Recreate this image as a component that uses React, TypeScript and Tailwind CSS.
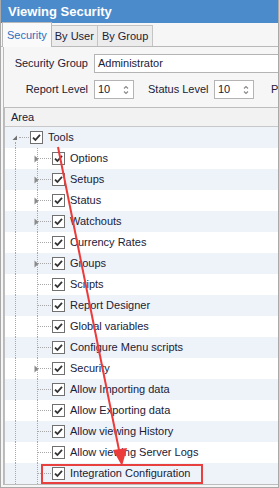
import React from "react";

type Item = { label: string; expander?: boolean };

const children: Item[] = [
  { label: "Options", expander: true },
  { label: "Setups", expander: true },
  { label: "Status", expander: true },
  { label: "Watchouts", expander: true },
  { label: "Currency Rates" },
  { label: "Groups", expander: true },
  { label: "Scripts" },
  { label: "Report Designer" },
  { label: "Global variables" },
  { label: "Configure Menu scripts" },
  { label: "Security", expander: true },
  { label: "Allow Importing data" },
  { label: "Allow Exporting data" },
  { label: "Allow viewing History" },
  { label: "Allow viewing Server Logs" },
  { label: "Integration Configuration" },
];

function CheckBox() {
  return (
    <span className="flex h-[13px] w-[13px] shrink-0 items-center justify-center border border-[#707070] bg-white">
      <svg width="11" height="11" viewBox="0 0 11 11">
        <path d="M2 5.6 L4.4 8 L9 2.8" fill="none" stroke="#333" strokeWidth="1.8" />
      </svg>
    </span>
  );
}

function Spinner({ value }: { value: string }) {
  return (
    <div className="flex h-[19px] w-[40px] items-center justify-between border border-[#b4b4b4] bg-white pl-[3px] pr-[4px]">
      <span>{value}</span>
      <svg width="6" height="12" viewBox="0 0 6 12">
        <path d="M1 4.5 L3 2.5 L5 4.5 M1 7.5 L3 9.5 L5 7.5" fill="none" stroke="#8a8a8a" strokeWidth="1.2" />
      </svg>
    </div>
  );
}

function RootRow() {
  return (
    <div className="flex h-[21px] items-center bg-[#eef3f9]">
      <div className="relative h-full w-[25px] shrink-0">
        <svg className="absolute left-[7px] top-[8px]" width="6" height="6" viewBox="0 0 6 6">
          <path d="M5 0.5 L5 5 L0.5 5 Z" fill="#707070" />
        </svg>
        <span className="absolute left-[10px] top-[15px] h-[6px] border-l border-dotted border-[#a8a8a8]" />
        <span className="absolute left-[14px] top-[10px] w-[10px] border-t border-dotted border-[#a8a8a8]" />
      </div>
      <CheckBox />
      <span className="ml-[5px]">Tools</span>
    </div>
  );
}

function ChildRow({ item, shaded }: { item: Item; shaded: boolean }) {
  return (
    <div className={`flex h-[21px] items-center ${shaded ? "bg-[#eef3f9]" : "bg-white"}`}>
      <div className="relative h-full w-[47px] shrink-0">
        <span className="absolute left-[10px] top-0 h-full border-l border-dotted border-[#a8a8a8]" />
        <span className="absolute left-[32px] top-0 h-full border-l border-dotted border-[#a8a8a8]" />
        <span className="absolute left-[33px] top-[10px] w-[13px] border-t border-dotted border-[#a8a8a8]" />
        {item.expander && (
          <svg className="absolute left-[29px] top-[7px]" width="5" height="8" viewBox="0 0 5 8">
            <path d="M0.5 0.5 L4.5 4 L0.5 7.5 Z" fill="#8a8a8a" />
          </svg>
        )}
      </div>
      <CheckBox />
      <span className="ml-[5px] whitespace-nowrap">{item.label}</span>
    </div>
  );
}

export default function App() {
  return (
    <div
      className="relative h-[488px] w-[279px] overflow-hidden border-x border-b border-[#a9a9a9] bg-[#f6f6f6] text-[11px] text-[#1a2138]"
      style={{ fontFamily: '"Liberation Sans", Arial, sans-serif' }}
    >
      <div className="flex h-[23px] items-center bg-[#4b8bcb] pl-[7px] text-[13px] font-bold text-white">
        Viewing Security
      </div>

      <div className="flex h-[24px] items-end border-b border-[#b9b9b9] pl-[1px]">
        <div className="-mb-px flex h-[25px] items-center border border-b-0 border-[#b9b9b9] bg-[#fafafa] px-[4px] text-[#2a6fc0]">
          Security
        </div>
        <div className="flex h-[21px] items-center border border-l-0 border-b-0 border-[#c4c4c4] bg-[#ececec] px-[3px]">
          By User
        </div>
        <div className="flex h-[21px] items-center border border-l-0 border-b-0 border-[#c4c4c4] bg-[#ececec] px-[4px]">
          By Group
        </div>
      </div>

      <div className="ml-[2px] border-l border-[#b9b9b9]">
        <div className="flex flex-col gap-[7px] pb-[8px] pt-[7px]">
          <div className="flex items-center">
            <span className="w-[84px] shrink-0 whitespace-nowrap text-right">Security Group</span>
            <div className="ml-[6px] flex h-[19px] w-[200px] shrink-0 items-center border border-[#b4b4b4] bg-white pl-[3px]">
              Administrator
            </div>
          </div>
          <div className="flex items-center whitespace-nowrap">
            <span className="w-[84px] shrink-0 text-right">Report Level</span>
            <div className="ml-[6px]">
              <Spinner value="10" />
            </div>
            <span className="ml-[14px] w-[60px] shrink-0">Status Level</span>
            <div className="ml-[6px]">
              <Spinner value="10" />
            </div>
            <span className="ml-[17px]">P</span>
          </div>
        </div>

        <div className="w-[290px] border border-r-0 border-[#bdbdbd] bg-white">
          <div className="flex h-[19px] items-center border-b border-[#c8c8c8] bg-[#f2f2f2] pl-[6px]">
            Area
          </div>
          <RootRow />
          {children.map((item, i) => (
            <ChildRow key={item.label} item={item} shaded={i % 2 === 1} />
          ))}
        </div>
      </div>

      <div className="absolute left-[40px] top-[464px] h-[20px] w-[162px] border-2 border-[#e8403f]" />
      <svg className="pointer-events-none absolute left-0 top-0" width="279" height="488">
        <line x1="57" y1="147" x2="119" y2="455" stroke="#ec3b3b" strokeWidth="2" />
        <path d="M121 466 L112 450 L126 448 Z" fill="#ec3b3b" />
      </svg>
    </div>
  );
}
